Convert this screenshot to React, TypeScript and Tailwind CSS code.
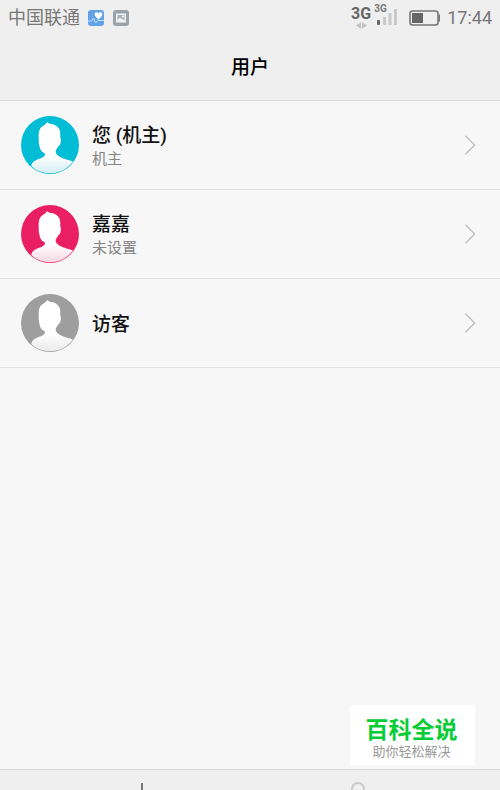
import React from "react";

const users = [
  { name: "您 (机主)", status: "机主", color: "#00bcd5", tint: "#d3eef3" },
  { name: "嘉嘉", status: "未设置", color: "#ea1e63", tint: "#f7d5e0" },
  { name: "访客", status: "", color: "#9e9e9e", tint: "#e9e9e9" },
];

function Avatar({ id, color, tint }: { id: string; color: string; tint: string }) {
  return (
    <svg className="size-[58px] shrink-0" viewBox="0 0 174 174" aria-hidden="true">
      <defs>
        <linearGradient id={`${id}-body`} gradientUnits="userSpaceOnUse" x1="0" y1="118" x2="0" y2="176">
          <stop offset="0" stopColor="#ffffff" />
          <stop offset="1" stopColor={tint} />
        </linearGradient>
        <clipPath id={`${id}-clip`}>
          <circle cx="87" cy="87" r="85" />
        </clipPath>
      </defs>
      <circle cx="87" cy="87" r="87" fill={color} />
      <path
        clipPath={`url(#${id}-clip)`}
        fill={`url(#${id}-body)`}
        d="M78 19 C81 20 83 23 88 24 C102 24 112 32 116 42 C119 50 117 58 118 65 C121 68 120 76 118 83 C117 88 113 89 111 92 C109 98 104 100 104 106 C104 113 108 118 116 122 C128 128 144 132 158 137 L174 174 L10 174 L31 150 C32 136 48 130 63 125 C72 121 74 116 70 111 C61 108 57 101 55 88 C52 80 54 74 53 66 C53 58 52 48 57 39 C60 31 73 28 78 19 Z"
      />
    </svg>
  );
}

function StatusBar() {
  return (
    <div className="flex h-9 items-center justify-between pl-2 pr-2 text-[#777777]">
      <div className="flex items-center">
        <span className="text-lg leading-6">中国联通</span>
        <svg className="ml-2 size-4" viewBox="0 0 16 16" aria-hidden="true">
          <rect width="16" height="16" rx="3" fill="#62a2e6" />
          <path d="M10.500 9.500 L7.500 6.500 C5 3 9 0.500 10.500 3.500 C12 0.500 16 3 13.500 6.500 Z" fill="#ffffff" />
          <path d="M0 11 H3.500 L5.500 8 L7.500 13 L9.500 10.500 H16" fill="none" stroke="#c4dcf6" strokeWidth="1" />
        </svg>
        <svg className="ml-[9px] size-4" viewBox="0 0 16 16" aria-hidden="true">
          <rect width="16" height="16" rx="3" fill="#98a3ab" />
          <rect x="3" y="3.500" width="10" height="9" fill="#f0f2f4" />
          <rect x="4.500" y="5" width="7" height="6" fill="#a6b0b7" />
          <path d="M4.500 11 V10 L7 7.500 L9 9.500 L10 9 L11.500 11 Z" fill="#f0f2f4" />
          <rect x="9" y="5.500" width="2" height="2" fill="#f0f2f4" />
        </svg>
      </div>

      <div className="flex items-center">
        {/* Data connection */}
        <div className="flex h-6 flex-col items-center">
          <span className="font-[Roboto] text-base font-bold leading-4 text-[#666666]">3G</span>
          <svg className="h-[7px] w-[11px]" viewBox="0 0 11 7" aria-hidden="true">
            <path d="M5 0 V7 L0 3.500 Z M6 0 V7 L11 3.500 Z" fill="#c2c2c2" />
          </svg>
        </div>

        {/* Signal */}
        <div className="relative ml-1 h-[22px] w-[22px]">
          <span className="absolute -left-px -top-1 font-[Roboto] text-[10px] font-bold leading-3">3G</span>
          <svg className="h-full w-full" viewBox="0 0 22 22" aria-hidden="true">
            <rect x="2" y="13" width="3" height="5" rx="1" fill="#666666" />
            <path d="M8 10 h3 v8 h-3 Z M13.500 6 h3 v12 h-3 Z M19 2 h3 v16 h-3 Z" fill="#c9c9c9" />
          </svg>
        </div>

        {/* Battery */}
        <svg className="ml-3 h-4 w-8" viewBox="0 0 32 16" aria-hidden="true">
          <rect x="1" y="1" width="28" height="14" rx="2.500" fill="none" stroke="#777777" strokeWidth="1.600" />
          <rect x="3" y="3" width="11" height="10" fill="#666666" />
          <path d="M29.500 4.500 h1.500 v7 h-1.500 Z" fill="#777777" />
        </svg>
        <span className="ml-[6px] font-[Roboto] text-lg leading-6">17:44</span>
      </div>
    </div>
  );
}

function UserList() {
  return (
    <ul>
      {users.map((user, index) => (
        <li key={user.name} className="border-b border-[#e2e2e2]">
          <button className="flex h-[88px] w-full items-center pl-[21px] pr-6 text-left">
            <Avatar id={`user-${index}`} color={user.color} tint={user.tint} />
            <span className="ml-[13px] flex flex-1 flex-col pt-1">
              <span className="text-[19px] font-medium leading-6 text-[#111111]">{user.name}</span>
              {user.status && (
                <span className="text-[15px] leading-[22px] text-[#858585]">{user.status}</span>
              )}
            </span>
            <svg className="h-5 w-3" viewBox="0 0 12 20" aria-hidden="true">
              <path d="M1.500 0.800 L10.700 10 L1.500 19.200" fill="none" stroke="#bdbdbd" strokeWidth="1.300" />
            </svg>
          </button>
        </li>
      ))}
    </ul>
  );
}

function App() {
  return (
    <div className="relative flex h-screen flex-col overflow-hidden bg-[#f7f7f7] font-['Roboto','Noto_Sans_CJK_SC',sans-serif]">
      <header className="border-b border-[#dadada] bg-[#efefef]">
        <StatusBar />
        <h1 className="flex h-16 items-center justify-center text-[19px] font-medium leading-6 text-black">
          用户
        </h1>
      </header>

      <main className="flex-1">
        <UserList />
      </main>

      {/* Bottom actions, cut off by the edge of the screen */}
      <nav className="flex h-[21px] items-start overflow-hidden border-t border-[#dadada] bg-[#efefef] px-[34px]">
        <button aria-label="添加用户" className="flex flex-1 justify-center pt-3">
          <svg className="size-6" viewBox="0 0 24 24" fill="none" stroke="#777777" strokeWidth="2" aria-hidden="true">
            <path d="M12 1 V23 M1 12 H23" />
          </svg>
        </button>
        <button aria-label="用户信息" className="flex flex-1 justify-center pt-3">
          <svg className="size-6" viewBox="0 0 24 24" fill="none" stroke="#c8c8c8" strokeWidth="1.800" aria-hidden="true">
            <circle cx="12" cy="7" r="6" />
            <path d="M1 23 C2 12 22 12 23 23" />
          </svg>
        </button>
      </nav>

      <div className="absolute bottom-[25px] right-[25px] flex h-[60px] w-[125px] flex-col items-center justify-center bg-white pr-0.5 pt-2">
        <p className="text-[23px] font-bold leading-[26px] text-[#06cc35]">百科全说</p>
        <p className="text-[13px] leading-4 text-[#999999]">助你轻松解决</p>
      </div>
    </div>
  );
}

export default App;
